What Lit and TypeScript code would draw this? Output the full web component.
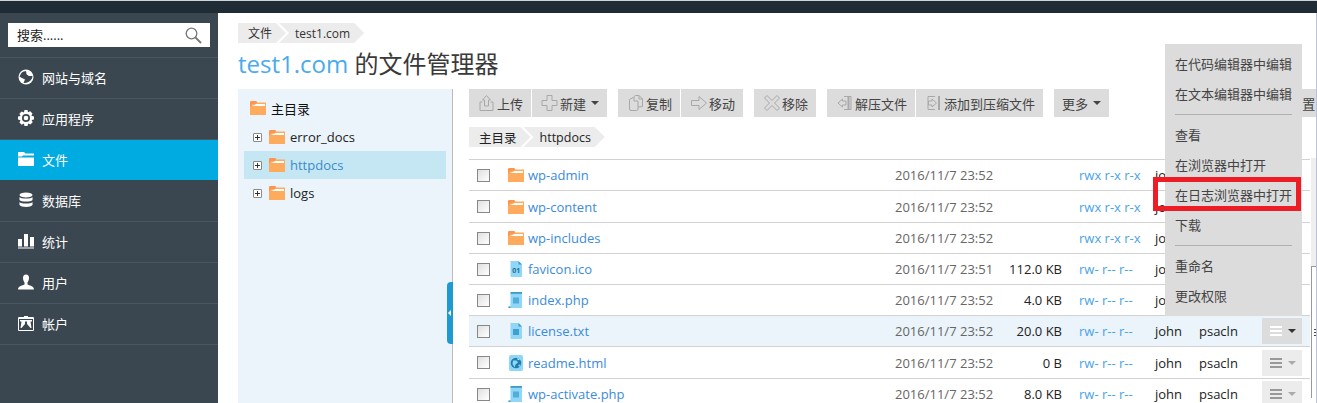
import { LitElement, html, css, svg } from "lit";
import { customElement } from "lit/decorators.js";

const folder = (w = 16, h = 14) => html`<svg class="ficon" width=${w} height=${h} viewBox="0 0 16 14"><path d="M0 1.500Q0 0 1.500 0H6L7.500 1.500H16V14H0Z" fill="#ffab5e"/><path d="M6.500 3H15V5H2Z" fill="#fff"/><path d="M0 1.500Q0 0 1.500 0H6L7.500 1.500H6.500L5.500 3H2L0 6Z" fill="#ff9350"/></svg>`;

const fileBase = (inner: unknown) => html`<svg class="ficon" width="16" height="16" viewBox="0 0 16 16">${inner}</svg>`;
const docBody = svg`<path d="M2.500 0H10.500L14 3.500V15Q14 16 13 16H3.500Q2.500 16 2.500 15Z" fill="#8fd6f7"/><path d="M10.500 0L14 3.500H10.500Z" fill="#3c9cc8"/>`;
const icoFile = fileBase(svg`${docBody}<text x="8.200" y="11.500" text-anchor="middle" font-family="Open Sans" font-size="7" font-weight="700" fill="#1f6f96">01</text>`);
const txtFile = fileBase(svg`${docBody}<rect x="5" y="6" width="6" height="6" fill="#3f9fcd"/>`);
const phpFile = fileBase(svg`<path d="M2.500 1H14V16H0.500V14.500H2.500Z" fill="#8fd6f7"/><rect x="2.500" y="0" width="11.500" height="1.800" fill="#3c9cc8"/><rect x="0.500" y="14.500" width="2" height="1.500" fill="#3c9cc8"/><rect x="5" y="5.500" width="6" height="6" fill="#52aed8"/>`);
const htmlFile = fileBase(svg`<rect x="1" y="0" width="14" height="16" rx="2" fill="#8fd6f7"/><circle cx="8" cy="8" r="5.300" fill="#1f7fae"/><path d="M5 5.500H8.500L10 7.500L7.500 9.500L6.500 12.500L4.500 9Z M10 10.500L12.500 9L11.500 12Z" fill="#8fd6f7"/><path d="M9 3.200L12 4.200L10 5.200Z" fill="#d8f2fd"/>`);

const navIcons: Record<string, unknown> = {
  globe: svg`<circle cx="8" cy="8" r="7.500" fill="#fff"/><path d="M3 4.500C5 2 9 1.500 11 2.500L8.500 5L11 7H14.500L14 9.500C12 13 8 14.500 5.500 14L7 10.500L3 8.500L1.500 7.500Z" fill="#3a4650"/><path d="M8 1.500C11 1.500 13.500 3.500 14.500 6.500L10.500 6.500L8.500 5Z" fill="#fff"/>`,
  gear: svg`<path fill-rule="evenodd" d="M6.500 0H9.500L10 2.300L12.200 1.300L14.500 3.600L13.400 5.800L16 6.500V9.500L13.600 10.100L14.700 12.300L12.400 14.600L10.200 13.500L9.500 16H6.500L5.900 13.600L3.700 14.700L1.400 12.400L2.500 10.200L0 9.500V6.500L2.500 5.900L1.400 3.700L3.700 1.400L5.900 2.500ZM8 4A4 4 0 1 0 8 12A4 4 0 1 0 8 4Z" fill="#fff"/><circle cx="8" cy="8" r="2.300" fill="#fff"/>`,
  folder: svg`<path d="M0 1H6L7.500 2.500H16V4.500H5L4 5.500H0Z" fill="#fff"/><path d="M0 6.500H16V15H0Z" fill="#fff"/>`,
  db: svg`<ellipse cx="8" cy="3" rx="6.500" ry="2.600" fill="#fff"/><path d="M1.500 5C3 7 13 7 14.500 5V8C13 10 3 10 1.500 8ZM1.500 10C3 12 13 12 14.500 10V13C13 15.500 3 15.500 1.500 13Z" fill="#fff"/>`,
  chart: svg`<rect x="0" y="6" width="4" height="7.500" fill="#fff"/><rect x="6" y="1" width="4" height="12.500" fill="#fff"/><rect x="12" y="4" width="4" height="9.500" fill="#fff"/><rect x="0" y="14.500" width="16" height="1" fill="#fff"/>`,
  user: svg`<path d="M8 0.500C10 0.500 11 2 11 4C11 6 10 7.500 9.500 8.500V10.500C11 11.500 16 11.500 16 15.500H0C0 11.500 5 11.500 6.500 10.500V8.500C6 7.500 5 6 5 4C5 2 6 0.500 8 0.500Z" fill="#fff"/>`,
  account: svg`<path fill-rule="evenodd" d="M1 2H6V1H10V2H15Q16 2 16 3V15Q16 16 15 16H1Q0 16 0 15V3Q0 2 1 2ZM1 4V15H15V4ZM2 5H14V6.500H2ZM3.500 6.500H7V9L3.500 13H2.500ZM9 6.500H12.500L13.500 13H12.500L9 9Z" fill="#fff"/>`,
};

const nav: [string, string, boolean?][] = [
  ["globe", "网站与域名"],
  ["gear", "应用程序"],
  ["folder", "文件", true],
  ["db", "数据库"],
  ["chart", "统计"],
  ["user", "用户"],
  ["account", "帐户"],
];

const tb = (d: unknown) => html`<svg class="tbicon" width="20" height="20" viewBox="0 0 20 20" fill="none" stroke="#a8a8a8" stroke-width="1">${d}</svg>`;
const tUpload = tb(svg`<path d="M5.500 9H3V17.500H16V9H13.500"/><path d="M9.500 2.500L13.500 7H11.500V13H7.500V7H5.500Z"/>`);
const tNew = tb(svg`<path d="M7 2.500H12V7.500H17V12.500H12V17.500H7V12.500H2V7.500H7Z"/>`);
const tCopy = tb(svg`<path d="M8 4L3.500 6.500V16Q3.500 17.500 5 17.500H10.500Q12 17.500 12 16V8"/><path d="M8 4V8H12"/><path d="M8 3.500L9.500 2.500H13L16.500 6V13.500L12 14"/><path d="M13 2.500V6H16.500"/>`);
const tMove = tb(svg`<path d="M2.500 7.500H10V3.500L17.500 10L10 16.500V12.500H2.500Z"/>`);
const tRemove = tb(svg`<path d="M5 2.500L10 7.500L15 2.500L17.500 5L12.500 10L17.500 15L15 17.500L10 12.500L5 17.500L2.500 15L7.500 10L2.500 5Z"/>`);
const tExtract = tb(svg`<path d="M9 3.500H16V16.500H9"/><path d="M13.500 3V17" stroke-width="2"/><path d="M3 10L7.500 6V8H11V12H7.500V14Z"/>`);
const tZip = tb(svg`<path d="M11 3.500H4V16.500H11"/><path d="M15 3V17" stroke-width="2"/><path d="M12.500 10L8 6V8H4.500V12H8V14Z"/>`);

type Row = { icon: unknown; name: string; date: string; size: string; perm: string; hl?: boolean };
const d52 = "2016/11/7 23:52";
const rows: Row[] = [
  { icon: folder(), name: "wp-admin", date: d52, size: "", perm: "rwx r-x r-x" },
  { icon: folder(), name: "wp-content", date: d52, size: "", perm: "rwx r-x r-x" },
  { icon: folder(), name: "wp-includes", date: d52, size: "", perm: "rwx r-x r-x" },
  { icon: icoFile, name: "favicon.ico", date: "2016/11/7 23:51", size: "112.0 KB", perm: "rw- r-- r--" },
  { icon: phpFile, name: "index.php", date: d52, size: "4.0 KB", perm: "rw- r-- r--" },
  { icon: txtFile, name: "license.txt", date: d52, size: "20.0 KB", perm: "rw- r-- r--", hl: true },
  { icon: htmlFile, name: "readme.html", date: d52, size: "0 B", perm: "rw- r-- r--" },
  { icon: phpFile, name: "wp-activate.php", date: d52, size: "8.0 KB", perm: "rw- r-- r--" },
];

@customElement("app-root")
export class AppRoot extends LitElement {
  static styles = css`
    :host { display: block; width: 1317px; height: 403px; overflow: hidden; position: relative; background: #fff;
      font-family: "Open Sans", "Noto Sans CJK SC", sans-serif; font-size: 13px; color: #222; }
    * { box-sizing: border-box; }
    .top { height: 13px; background: #1f2b35; border-top: 1px solid #cfd4d8; }
    .body { display: flex; height: 390px; }
    .side { width: 218px; flex: none; background: #3a4650; }
    .search { height: 45px; padding: 10px 8px; border-bottom: 1px solid #4a5762; }
    .sbox { height: 24px; background: #fff; display: flex; align-items: center; justify-content: space-between; padding: 0 8px 2px 9px; color: #222; font-size: 13px; }
    .sbox svg { margin-top: 2px; }
    .nav { height: 41px; border-bottom: 1px solid #4a5762; color: #fff; display: flex; align-items: center; gap: 8px; padding: 0 0 2px 18px; font-size: 13px; }
    .nav.on { background: #00abe2; border-bottom-color: #3a4650; }
    .nav svg { flex: none; }
    .main { flex: 1; min-width: 0; padding: 10px 0 0 20px; }
    .crumbs { display: flex; height: 20px; font-size: 12px; gap: 2px; color: #333; }
    .crumb { background: #ececec; display: flex; align-items: center; padding: 0 14px 0 10px; clip-path: polygon(0 0, calc(100% - 10px) 0, 100% 50%, calc(100% - 10px) 100%, 0 100%); }
    .crumb + .crumb { margin-left: -9px; padding-left: 16px; clip-path: polygon(0 0, calc(100% - 10px) 0, 100% 50%, calc(100% - 10px) 100%, 0 100%, 10px 50%); }
    h1 { margin: 5px 0 9px; font-size: 24px; line-height: 32px; height: 32px; font-weight: 400; color: #3a3a3a; }
    h1 span { color: #4aabeb; }
    .cols { display: flex; }
    .tree { width: 215px; height: 320px; flex: none; background: #eaf4fa; border-right: 1px solid #bbb; padding: 6px 6px 0 6px; position: relative; }
    .troot { height: 28px; display: flex; align-items: center; gap: 5px; padding: 0 0 2px 6px; font-size: 13px; color: #111; }
    .tnode { height: 28px; display: flex; align-items: center; padding-left: 9px; color: #222; }
    .tnode.sel { background: #c5e7f4; color: #3c8bc9; }
    .plus { width: 9px; height: 9px; border: 1px solid #888; border-radius: 1px; background: #fff; margin-right: 7px; position: relative; flex: none; }
    .plus::before { content: ""; position: absolute; left: 1px; right: 1px; top: 3px; height: 1px; background: #333; }
    .plus::after { content: ""; position: absolute; top: 1px; bottom: 1px; left: 3px; width: 1px; background: #333; }
    .tnode .ficon { margin-right: 5px; }
    .handle { position: absolute; right: -1px; top: 193px; width: 6px; height: 62px; background: #1e9ad0; border-radius: 4px 0 0 4px; display: flex; align-items: center; }
    .handle i { border: 3px solid transparent; border-right-color: #fff; border-left: 0; margin-left: 1px; }
    .right { flex: none; width: 841px; margin-left: 16px; }
    .toolbar { display: flex; height: 28px; width: 860px; }
    .btn { background: #dcdcdc; height: 28px; display: flex; align-items: center; padding: 0 8px; color: #444; margin-right: 1px; white-space: nowrap; flex: none; }
    .btn.gap { margin-right: 11px; }
    .btn.far { margin-left: 161px; padding-right: 1px; margin-right: 0; }
    .caret { border: 4px solid transparent; border-top-color: #444; border-bottom: 0; margin-left: 5px; }
    .pathbar { margin-top: 10px; height: 20px; }
    .pathbar .crumbs { font-size: 12.500px; color: #222; }
    .rows { margin-top: 12px; border-top: 1px solid #d2d2d2; }
    .row { display: grid; grid-template-columns: 39px 387px 100px 67px 93px 44px 63px 1fr; height: 31px; border-bottom: 1px solid #d2d2d2; align-items: center; }
    .row:nth-child(2), .row:nth-child(7) { height: 32px; }
    .row.hl { background: #eaf4fa; }
    .chk { width: 13px; height: 13px; border: 1px solid #888; background: linear-gradient(135deg, #e0e0e0, #fff); margin-left: 8px; }
    .name { display: flex; align-items: center; gap: 4px; color: #3c8bdb; white-space: nowrap; }
    .date { color: #666; white-space: nowrap; }
    .size { text-align: right; white-space: nowrap; color: #222; }
    .perm { color: #4aa3e8; white-space: nowrap; padding-left: 17px; }
    .own { color: #222; }
    .act { width: 40px; height: 26px; background: #ececec; display: flex; align-items: center; gap: 6px; padding-left: 8px; }
    .row.hl .act { background: #dcdcdc; }
    .bars { width: 12px; height: 10px; border-top: 2px solid #999; border-bottom: 2px solid #999; position: relative; }
    .bars::after { content: ""; position: absolute; left: 0; right: 0; top: 2px; height: 2px; background: #999; }
    .row.hl .bars { border-color: #fff; }
    .row.hl .bars::after { background: #fff; }
    .act i { border: 4px solid transparent; border-top-color: #aaa; border-bottom: 0; }
    .row.hl .act i { border-top-color: #333; }
    .menu { position: absolute; left: 1165px; top: 44px; width: 137px; height: 272px; background: #dcdcdc; padding: 4.600px 10px 0; font-size: 13px; color: #444; }
    .mi { height: 30px; line-height: 30px; white-space: nowrap; }
    .sep { height: 1px; background: #b0b0b0; margin: 5px 0; }
    .red { position: absolute; left: 1153px; top: 177px; width: 148px; height: 34px; border: 5px solid #ee1c25; }
    .edge { position: absolute; right: 0; top: 13px; bottom: 0; width: 1px; background: #bcc3d6; }
    .sb { position: absolute; left: 1311px; top: 158px; height: 240px; width: 5px; background: #efefef; }
    .thumb { position: absolute; left: 0; right: 0; top: 108px; bottom: 0; background: #fff; border-left: 1px solid #999; border-top: 1px solid #999; }
    .grip { position: absolute; right: 0; top: 62px; width: 2px; height: 8px; background: repeating-linear-gradient(#444 0 1px, transparent 1px 3px); }
  `;

  render() {
    return html`
      <div class="top"></div>
      <div class="body">
        <div class="side">
          <div class="search"><div class="sbox"><span>搜索......</span>
            <svg width="17" height="17" viewBox="0 0 17 17" fill="none" stroke="#777" stroke-width="1.300"><circle cx="6.500" cy="6.500" r="5.300"/><path d="M10.500 10.500L16 16" stroke-width="1.800"/></svg>
          </div></div>
          ${nav.map(([ic, t, on]) => html`<div class="nav ${on ? "on" : ""}"><svg width="16" height="16" viewBox="0 0 16 16">${navIcons[ic]}</svg><span>${t}</span></div>`)}
        </div>
        <div class="main">
          <div class="crumbs"><div class="crumb">文件</div><div class="crumb">test1.com</div></div>
          <h1><span>test1.com</span> 的文件管理器</h1>
          <div class="cols">
            <div class="tree">
              <div class="troot">${folder()}<span>主目录</span></div>
              <div class="tnode"><i class="plus"></i>${folder()}<span>error_docs</span></div>
              <div class="tnode sel"><i class="plus"></i>${folder()}<span>httpdocs</span></div>
              <div class="tnode"><i class="plus"></i>${folder()}<span>logs</span></div>
              <div class="handle"><i></i></div>
            </div>
            <div class="right">
              <div class="toolbar">
                <div class="btn">${tUpload}上传</div>
                <div class="btn gap">${tNew}新建<i class="caret"></i></div>
                <div class="btn">${tCopy}复制</div>
                <div class="btn gap">${tMove}移动</div>
                <div class="btn gap">${tRemove}移除</div>
                <div class="btn">${tExtract}解压文件</div>
                <div class="btn gap">${tZip}添加到压缩文件</div>
                <div class="btn gap">更多<i class="caret"></i></div>
                <div class="btn far">设置</div>
              </div>
              <div class="pathbar"><div class="crumbs"><div class="crumb">主目录</div><div class="crumb">httpdocs</div></div></div>
              <div class="rows">
                ${rows.map((r) => html`<div class="row ${r.hl ? "hl" : ""}">
                  <div class="chk"></div>
                  <div class="name">${r.icon}<span>${r.name}</span></div>
                  <div class="date">${r.date}</div>
                  <div class="size">${r.size}</div>
                  <div class="perm">${r.perm}</div>
                  <div class="own">john</div>
                  <div class="own">psacln</div>
                  <div class="act"><span class="bars"></span><i></i></div>
                </div>`)}
              </div>
            </div>
          </div>
        </div>
      </div>
      <div class="sb"><div class="thumb"><i class="grip"></i></div></div>
      <div class="edge"></div>
      <div class="menu">
        <div class="mi">在代码编辑器中编辑</div>
        <div class="mi">在文本编辑器中编辑</div>
        <div class="sep"></div>
        <div class="mi">查看</div>
        <div class="mi">在浏览器中打开</div>
        <div class="mi">在日志浏览器中打开</div>
        <div class="mi">下载</div>
        <div class="sep"></div>
        <div class="mi">重命名</div>
        <div class="mi">更改权限</div>
      </div>
      <div class="red"></div>
    `;
  }
}
